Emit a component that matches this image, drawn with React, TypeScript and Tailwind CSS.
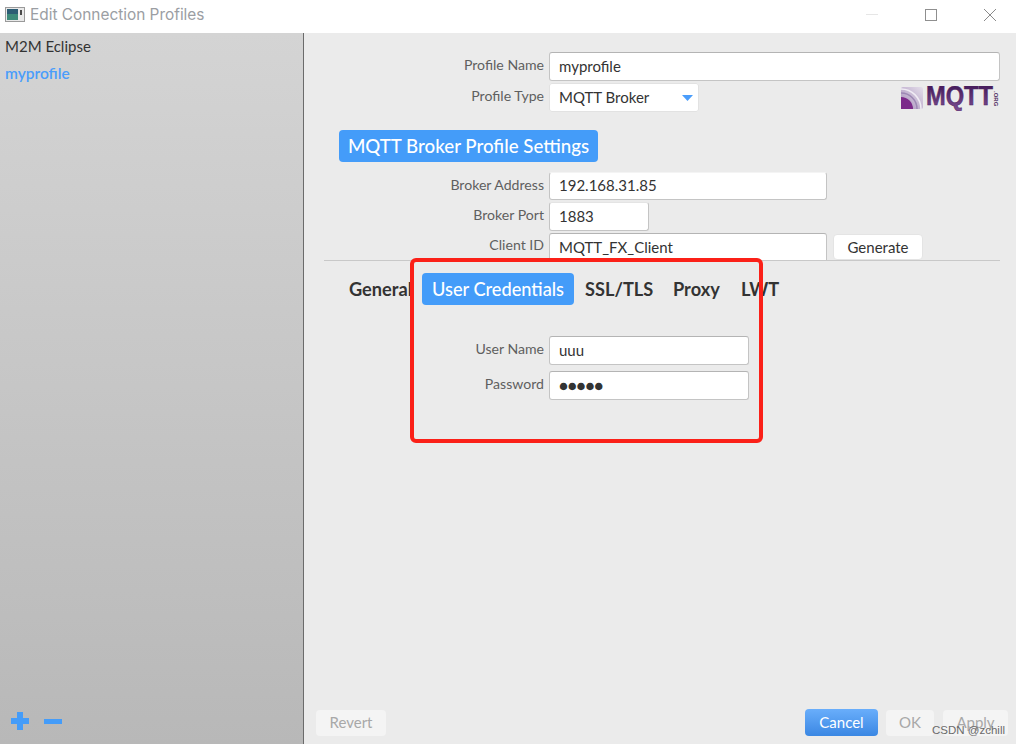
const font = { fontFamily: 'Lato, "Liberation Sans", sans-serif' };

function Label({ children }: { children: string }) {
  return (
    <span className="w-[240px] shrink-0 pb-[2px] text-right text-[14.1px] leading-none text-[#5f5f5f]">
      {children}
    </span>
  );
}

function Field({ value, width, className = '' }: { value: string; width: string; className?: string }) {
  return (
    <div
      className={`flex h-full items-center rounded-[3px] border border-[#c4c4c4] border-t-[#b4b4b4] bg-white pl-[9px] text-[15px] leading-none text-[#333] ${width} ${className}`}
    >
      {value}
    </div>
  );
}

function MqttLogo() {
  return (
    <svg width="100" height="25" viewBox="0 0 100 25" className="ml-auto mt-[1px] shrink-0">
      <defs>
        <linearGradient id="mqttText" x1="0" y1="0" x2="0" y2="1">
          <stop offset="0" stopColor="#3a1150" />
          <stop offset="1" stopColor="#7d4f93" />
        </linearGradient>
        <linearGradient id="mqttIcon" x1="1" y1="0" x2="0" y2="1">
          <stop offset="0" stopColor="#e4deea" />
          <stop offset="1" stopColor="#a78fbb" />
        </linearGradient>
      </defs>
      <rect x="1" y="1" width="22" height="22" rx="2" fill="url(#mqttIcon)" />
      <path d="M1 3 A20 20 0 0 1 21 23" fill="none" stroke="#f0ecf4" strokeWidth="1.5" />
      <path d="M1 7 A16 16 0 0 1 17 23" fill="none" stroke="#9d88b4" strokeWidth="1.5" />
      <path d="M1 11 A12 12 0 0 1 13 23 L1 23 Z" fill="#7c2a8a" />
      <text
        x="26"
        y="19"
        fontFamily="Liberation Sans"
        fontWeight="700"
        fontSize="27"
        fill="url(#mqttText)"
        stroke="#4a2060"
        strokeWidth="0.5"
        textLength="67"
        lengthAdjust="spacingAndGlyphs"
      >
        MQTT
      </text>
      <text
        x="0"
        y="0"
        transform="translate(94 5) rotate(90)"
        fontFamily="Liberation Sans"
        fontWeight="700"
        fontSize="6"
        fill="#4b2a60"
      >
        .ORG
      </text>
    </svg>
  );
}

function FooterButton({ label, width }: { label: string; width: string }) {
  return (
    <div
      className={`flex h-[26px] items-center justify-center rounded-[4px] bg-[#f4f4f4] text-[15px] text-[#a8a8a8] ${width}`}
    >
      {label}
    </div>
  );
}

export default function App() {
  return (
    <div className="relative flex h-[744px] w-[1016px] flex-col overflow-hidden bg-[#ebebeb]" style={font}>
      {/* title bar */}
      <div className="flex h-[33px] shrink-0 items-center bg-white pb-[4px] pl-[5px]">
        <svg width="20" height="15" viewBox="0 0 20 15" className="shrink-0">
          <rect x="0.5" y="0.5" width="19" height="14" fill="#e9e9e9" stroke="#9a9a9a" />
          <rect x="2" y="2" width="11" height="11" fill="#3d8a7a" />
          <rect x="2" y="2" width="11" height="5" fill="#2c5d74" />
          <rect x="15" y="3" width="2" height="5" fill="#4a4a4a" />
        </svg>
        <span
          className="ml-[5px] text-[15.4px] leading-none text-[#9b9ea3]"
          style={{ fontFamily: 'Inter, "Noto Sans", sans-serif' }}
        >
          Edit Connection Profiles
        </span>
        <div className="ml-auto flex items-center">
          <div className="h-px w-3 bg-[#e6e6e6]" />
          <div className="ml-[47px] h-3 w-3 border border-[#8f8f8f]" />
          <svg width="14" height="14" viewBox="0 0 14 14" className="ml-[46px] mr-[19px]">
            <path d="M1 1 L13 13 M13 1 L1 13" stroke="#8a8a8a" strokeWidth="1" fill="none" />
          </svg>
        </div>
      </div>

      <div className="flex min-h-0 flex-1">
        {/* profile list */}
        <aside className="flex w-[304px] shrink-0 flex-col border-r border-[#6b6b6b] bg-gradient-to-b from-[#d4d4d4] to-[#b8b8b8] pl-[5px]">
          <div className="flex h-[27px] items-center text-[15px] text-[#333]">M2M Eclipse</div>
          <div className="flex h-[27px] items-center text-[15.5px] font-semibold text-[#4a9dfb]">myprofile</div>
          <div className="mb-[14px] ml-[6px] mt-auto flex items-center gap-[15px]">
            <div className="relative h-[18px] w-[18px]">
              <div className="absolute left-0 top-[6px] h-[6px] w-[18px] bg-[#449cf9]" />
              <div className="absolute left-[6px] top-0 h-[18px] w-[6px] bg-[#449cf9]" />
            </div>
            <div className="h-[5px] w-[18px] bg-[#449cf9]" />
          </div>
        </aside>

        {/* settings panel */}
        <main className="flex min-w-0 flex-1 flex-col pt-[19px]">
          <div className="flex h-[29px] items-center gap-[5px]">
            <Label>Profile Name</Label>
            <Field value="myprofile" width="w-[451px]" />
          </div>
          <div className="mt-[2px] flex h-[29px] items-center gap-[5px] pr-[16px]">
            <Label>Profile Type</Label>
            <div className="flex h-full w-[150px] items-center justify-between rounded-[3px] bg-white pl-[10px] pr-[6px] text-[15px] leading-none text-[#333] shadow-[0_0_0_1px_#e2e2e2_inset]">
              MQTT Broker
              <svg width="11" height="6" viewBox="0 0 11 6">
                <path d="M0 0 H11 L5.5 6 Z" fill="#4a9dfb" />
              </svg>
            </div>
            <MqttLogo />
          </div>

          <div className="ml-[35px] mt-[18px] flex h-[32px] w-[259px] items-center justify-center rounded-[4px] bg-[#449cf9] text-[18.7px] font-medium leading-none text-white">
            MQTT Broker Profile Settings
          </div>

          <div className="mt-[10px] flex h-[28px] items-center gap-[5px]">
            <Label>Broker Address</Label>
            <Field value="192.168.31.85" width="w-[278px]" className="border-t-[#f4f4f4] pb-[2px]" />
          </div>
          <div className="mt-[2px] flex h-[29px] items-center gap-[5px]">
            <Label>Broker Port</Label>
            <Field value="1883" width="w-[100px]" className="border-t-[#e4e4e4]" />
          </div>
          <div className="mt-[2px] flex h-[27px] items-center gap-[5px]">
            <Label>Client ID</Label>
            <Field value="MQTT_FX_Client" width="w-[278px]" className="rounded-b-none border-b-0" />
            <div className="ml-px flex h-[26px] w-[90px] items-center justify-center self-end rounded-[4px] border border-[#e4e4e4] bg-white text-[15px] text-[#333]">
              Generate
            </div>
          </div>
          <div className="ml-[20px] h-px w-[676px] shrink-0 bg-[#c8c8c8]" />

          {/* tabs */}
          <div className="mt-[12px] flex h-[32px] items-center pl-[45px] text-[18.2px] font-bold leading-none text-[#333]">
            <span className="w-[73px]">General</span>
            <span className="flex h-[32px] w-[152px] items-center justify-center rounded-[4px] bg-[#449cf9] font-medium text-white">
              User Credentials
            </span>
            <span className="ml-[11px] w-[88px]">SSL/TLS</span>
            <span className="w-[68px]">Proxy</span>
            <span>LWT</span>
          </div>

          <div className="mt-[31px] flex h-[29px] items-center gap-[5px]">
            <Label>User Name</Label>
            <Field value="uuu" width="w-[200px]" />
          </div>
          <div className="mt-[6px] flex h-[29px] items-center gap-[5px]">
            <Label>Password</Label>
            <Field value="●●●●●" width="w-[200px]" className="text-[15.5px] tracking-[-0.2px]" />
          </div>

          {/* footer */}
          <div className="mb-[8px] mt-auto flex items-center pl-[12px]">
            <FooterButton label="Revert" width="w-[70px]" />
            <div className="ml-auto flex h-[27px] w-[73px] items-center justify-center rounded-[4px] bg-gradient-to-b from-[#69aefb] to-[#3a87e3] text-[15px] text-white">
              Cancel
            </div>
            <div className="ml-[8px]">
              <FooterButton label="OK" width="w-[48px]" />
            </div>
            <div className="ml-[9px] mr-[8px]">
              <FooterButton label="Apply" width="w-[65px]" />
            </div>
          </div>
        </main>
      </div>

      {/* annotation drawn over the screenshot */}
      <div className="absolute left-[410px] top-[258px] h-[185px] w-[353px] rounded-[6px] border-[4px] border-[#fb2018]" />
      <span
        className="absolute left-[932px] top-[723px] text-[11.5px] leading-[14px] text-[#6a6a6a]"
        style={{ fontFamily: '"Liberation Sans", sans-serif' }}
      >
        CSDN @zchill
      </span>
    </div>
  );
}
